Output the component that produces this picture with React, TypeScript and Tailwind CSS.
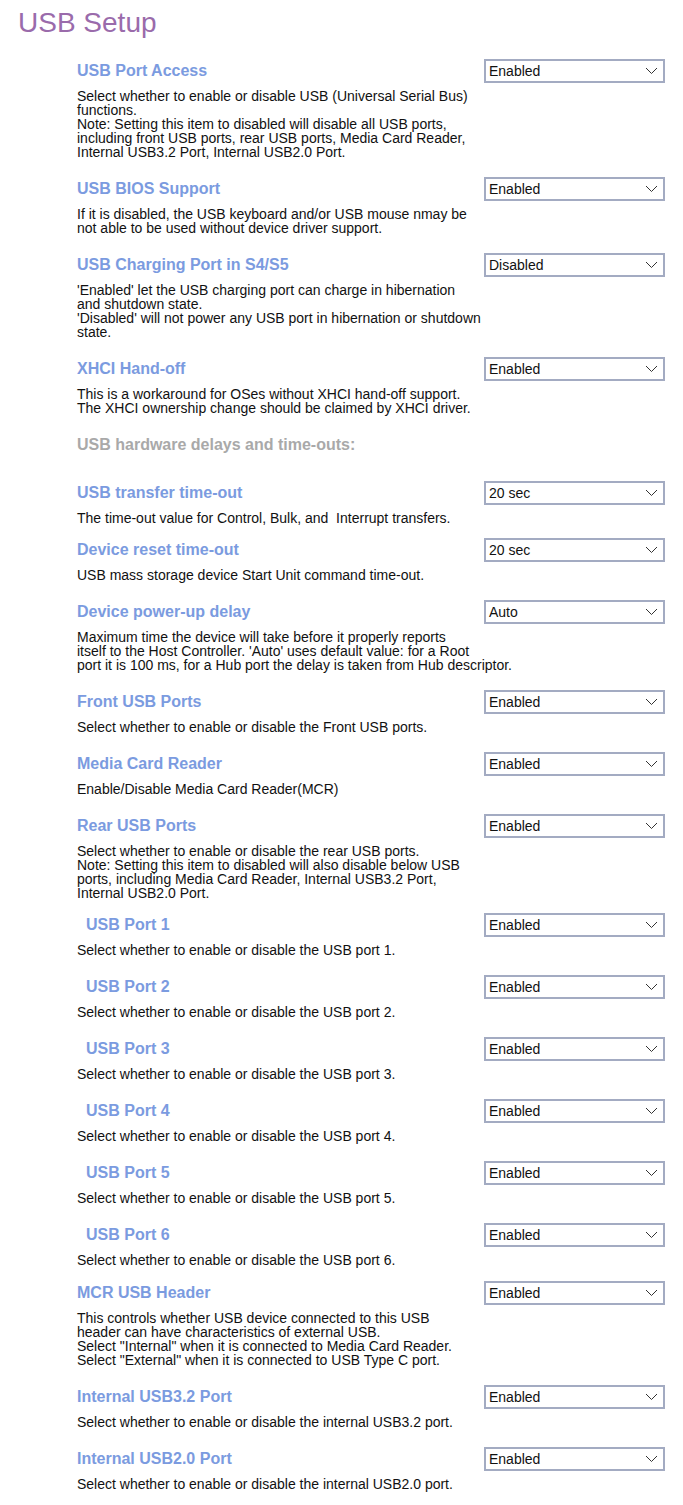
type Item = {
  title: string;
  value?: string;
  lines?: string[];
  indent?: boolean;
  header?: boolean;
  gap?: string;
};

const portDesc = (n: number) => `Select whether to enable or disable the USB port ${n}.`;

const items: Item[] = [
  {
    title: 'USB Port Access',
    value: 'Enabled',
    lines: [
      'Select whether to enable or disable USB (Universal Serial Bus)',
      'functions.',
      'Note: Setting this item to disabled will disable all USB ports,',
      'including front USB ports, rear USB ports, Media Card Reader,',
      'Internal USB3.2 Port, Internal USB2.0 Port.',
    ],
  },
  {
    title: 'USB BIOS Support',
    value: 'Enabled',
    lines: [
      'If it is disabled, the USB keyboard and/or USB mouse nmay be',
      'not able to be used without device driver support.',
    ],
  },
  {
    title: 'USB Charging Port in S4/S5',
    value: 'Disabled',
    lines: [
      "'Enabled' let the USB charging port can charge in hibernation",
      'and shutdown state.',
      "'Disabled' will not power any USB port in hibernation or shutdown",
      'state.',
    ],
  },
  {
    title: 'XHCI Hand-off',
    value: 'Enabled',
    lines: [
      'This is a workaround for OSes without XHCI hand-off support.',
      'The XHCI ownership change should be claimed by XHCI driver.',
    ],
  },
  { title: 'USB hardware delays and time-outs:', header: true },
  {
    title: 'USB transfer time-out',
    value: '20 sec',
    lines: ['The time-out value for Control, Bulk, and  Interrupt transfers.'],
    gap: 'mb-[13px]',
  },
  {
    title: 'Device reset time-out',
    value: '20 sec',
    lines: ['USB mass storage device Start Unit command time-out.'],
  },
  {
    title: 'Device power-up delay',
    value: 'Auto',
    lines: [
      'Maximum time the device will take before it properly reports',
      "itself to the Host Controller. 'Auto' uses default value: for a Root",
      'port it is 100 ms, for a Hub port the delay is taken from Hub descriptor.',
    ],
  },
  {
    title: 'Front USB Ports',
    value: 'Enabled',
    lines: ['Select whether to enable or disable the Front USB ports.'],
  },
  {
    title: 'Media Card Reader',
    value: 'Enabled',
    lines: ['Enable/Disable Media Card Reader(MCR)'],
  },
  {
    title: 'Rear USB Ports',
    value: 'Enabled',
    lines: [
      'Select whether to enable or disable the rear USB ports.',
      'Note: Setting this item to disabled will also disable below USB',
      'ports, including Media Card Reader, Internal USB3.2 Port,',
      'Internal USB2.0 Port.',
    ],
    gap: 'mb-[13px]',
  },
  { title: 'USB Port 1', value: 'Enabled', lines: [portDesc(1)], indent: true },
  { title: 'USB Port 2', value: 'Enabled', lines: [portDesc(2)], indent: true },
  { title: 'USB Port 3', value: 'Enabled', lines: [portDesc(3)], indent: true },
  { title: 'USB Port 4', value: 'Enabled', lines: [portDesc(4)], indent: true },
  { title: 'USB Port 5', value: 'Enabled', lines: [portDesc(5)], indent: true },
  { title: 'USB Port 6', value: 'Enabled', lines: [portDesc(6)], indent: true, gap: 'mb-[14px]' },
  {
    title: 'MCR USB Header',
    value: 'Enabled',
    lines: [
      'This controls whether USB device connected to this USB',
      'header can have characteristics of external USB.',
      'Select "Internal" when it is connected to Media Card Reader.',
      'Select "External" when it is connected to USB Type C port.',
    ],
  },
  {
    title: 'Internal USB3.2 Port',
    value: 'Enabled',
    lines: ['Select whether to enable or disable the internal USB3.2 port.'],
  },
  {
    title: 'Internal USB2.0 Port',
    value: 'Enabled',
    lines: ['Select whether to enable or disable the internal USB2.0 port.'],
  },
];

function FakeSelect({ value }: { value: string }) {
  return (
    <div className="flex h-6 w-[181px] shrink-0 items-center justify-between border-2 border-[#a3abc2] bg-white pl-[3px] pr-[5px] text-[14px] text-[#111]">
      <span>{value}</span>
      <svg width="13" height="8" viewBox="0 0 13 8" fill="none">
        <polyline points="1,1 6.5,6.5 12,1" stroke="#333" strokeWidth="1" />
      </svg>
    </div>
  );
}

function SettingItem({ item }: { item: Item }) {
  if (item.header) {
    return (
      <div className="mb-6 flex h-6 items-center text-[16px] font-bold text-[#a9a9a9]">
        {item.title}
      </div>
    );
  }
  return (
    <div className={item.gap ?? 'mb-[18px]'}>
      <div className="flex h-6 items-center justify-between">
        <span className={`text-[16px] font-bold text-[#7b9be0] ${item.indent ? 'pl-[9px]' : ''}`}>
          {item.title}
        </span>
        {item.value && <FakeSelect value={item.value} />}
      </div>
      <div className="mt-[6px] text-[14px] leading-[14px] text-[#111]">
        {item.lines?.map((line, i) => (
          <div key={i} className="whitespace-pre">
            {line}
          </div>
        ))}
      </div>
    </div>
  );
}

export default function App() {
  return (
    <div
      className="min-h-[1505px] w-[683px] overflow-hidden bg-white"
      style={{ fontFamily: '"Liberation Sans", Arial, sans-serif' }}
    >
      <h1 className="pl-[18px] pt-[7px] text-[28px] font-normal leading-[32px] text-[#9a6bab]">
        USB Setup
      </h1>
      <div className="mt-5 pl-[77px] pr-[18px]">
        {items.map((item) => (
          <SettingItem key={item.title} item={item} />
        ))}
      </div>
    </div>
  );
}
